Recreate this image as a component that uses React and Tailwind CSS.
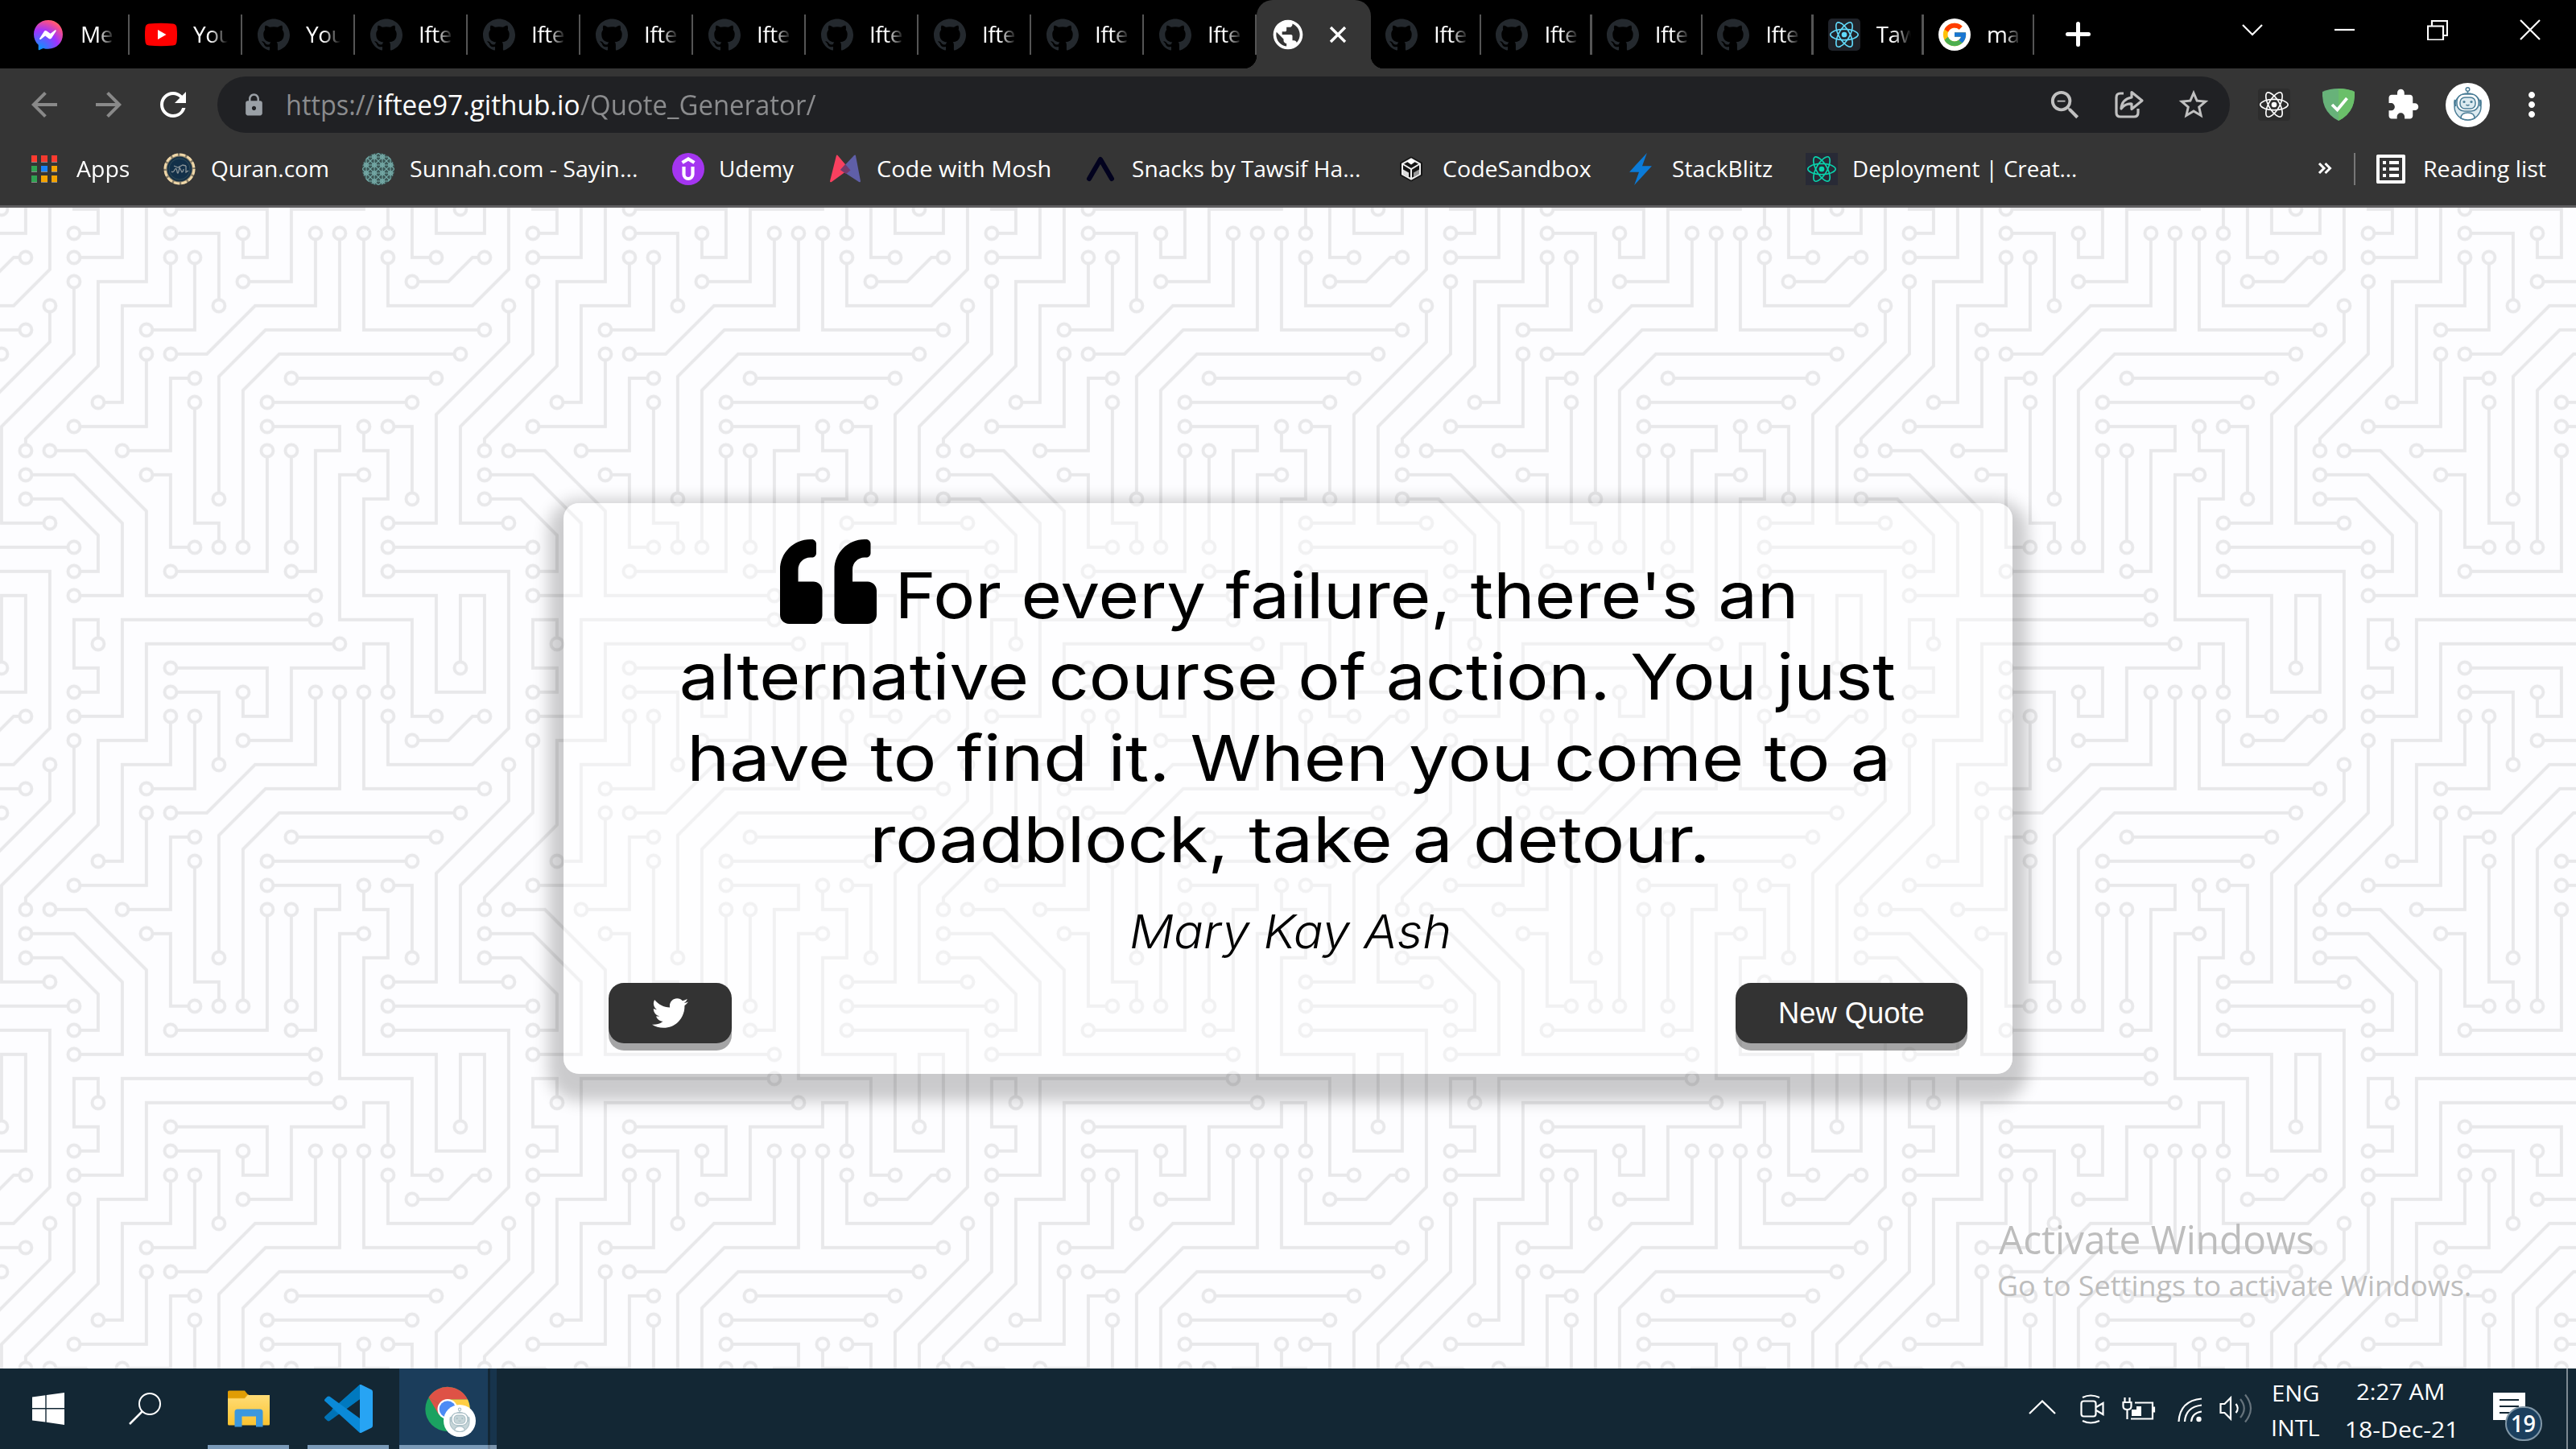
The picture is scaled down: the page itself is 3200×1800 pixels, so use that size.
import React, { useLayoutEffect, useRef, useState } from "react";
import { SiGithub, SiReact } from "react-icons/si";
import { FcGoogle } from "react-icons/fc";
import { FaQuoteLeft, FaTwitter } from "react-icons/fa";
import {
  MdPublic, MdArrowBack, MdArrowForward, MdRefresh, MdLock, MdZoomOut,
  MdStarBorder, MdExtension, MdMoreVert, MdListAlt,
} from "react-icons/md";

/* Single line of text stretched so that its ink spans exactly `width` pixels. */
function Fit({ width, className = "", children }) {
  const ref = useRef(null);
  const [box, setBox] = useState({ scale: 1, shift: 0 });
  useLayoutEffect(() => {
    const cs = getComputedStyle(ref.current);
    const ctx = document.createElement("canvas").getContext("2d");
    ctx.font = `${cs.fontStyle} ${cs.fontWeight} ${cs.fontSize} ${cs.fontFamily}`;
    const m = ctx.measureText(children);
    const scale = width / (m.actualBoundingBoxLeft + m.actualBoundingBoxRight);
    setBox({ scale, shift: m.actualBoundingBoxLeft * scale });
  }, [children, width]);
  return (
    <span className={"block shrink-0 " + className} style={{ width }}>
      <span
        ref={ref}
        className="inline-block origin-left whitespace-pre"
        style={{ transform: `translateX(${box.shift}px) scaleX(${box.scale})` }}
      >
        {children}
      </span>
    </span>
  );
}

/* ---------- circuit board background ---------- */
/* Traces on a 19 x 19 grid; both ends of each carry a pad. */
const TRACES = [
  "7,19 11,19 11,21 10,21 10,20",
  "19,19 19,16 20,16 20,20 18,20 18,16 15,16 15,12 16,12 16,10 15,10 15,9",
  "3,20 4,20 4,19 3,19 3,17 4,17 4,18",
  "7,20 9,20 9,23",
  "13,1 13,4 10.5,4 8.5,6 7,6",
  "14,1 14,5 10.93,5 9,6.93 9,12",
  "15,1 15,5 20,5",
  "16,20 16,18 15,18 15,19 12,19 12,22 10,22",
  "20,2 19.5,2 18.5,3 17,3",
  "3,21 5,21 5,17 13,17",
  "7,2 7,4 5,4 5,8 4,8",
  "8,2 8,5 6,5",
  "16,15 21,15 21,21.5 19.5,23 16,23 16,21",
  "18,21 17,21 17,17 14,17 14,11 15,11",
  "3,3 3,6 0,9 0,13 2,13",
  "21,4 21,5.5 18,8.5 18,13 16,13",
  "19,6 11.5,6 10,7.5 10,14",
  "6,6 6,9 3,9",
  "8,7 7,7 7,10 5,10",
  "12,7 18,7",
  "11,8 17,8",
  "8,8 8,13 9,13 9,14",
  "11,9 14,9 14,10 13,10 13,15 12,15",
  "16,9 17,9 17,12",
  "1,10 1,9.5 4,6.5 4,3 6,3 6,-1 14,-1",
  "2,10 3.5,10 6,12.5 6,16 13,16",
  "11,10 11,15 7,15",
  "12,10 12,14",
  "1,11 3,11 5,13 5,16 3,16",
  "6,11 7,11 7,14 8,14",
  "1,12 2.5,12 4,13.5 4,15 3,15",
  "16,14 22,14",
];
const SHIFTS = [-19, 0, 19];

function Circuit() {
  return (
    <svg className="absolute inset-0 h-full w-full" aria-hidden="true">
      <defs>
        <g id="traces" fill="none" stroke="#e8e8ea" strokeWidth="0.13">
          {TRACES.map((t) => <polyline key={t} points={t} />)}
          {TRACES.map((t) => {
            const pts = t.split(" ");
            return [pts[0], pts[pts.length - 1]].map((p) => {
              const [cx, cy] = p.split(",");
              return <circle key={t + p} cx={cx} cy={cy} r="0.25" fill="#fdfdff" />;
            });
          })}
        </g>
        <pattern id="board" width="19" height="19" patternUnits="userSpaceOnUse" patternTransform="translate(1.9 1.8) scale(30)">
          {SHIFTS.map((x) => SHIFTS.map((y) => <use key={x + "_" + y} href="#traces" x={x} y={y} />))}
        </pattern>
      </defs>
      <rect width="100%" height="100%" fill="#fdfdff" />
      <rect width="100%" height="100%" fill="url(#board)" />
    </svg>
  );
}

/* ---------- small icons ---------- */
const Messenger = () => (
  <svg className="h-10 w-10" viewBox="0 0 40 40">
    <defs>
      <radialGradient id="msg" cx="0.2" cy="1" r="1.1">
        <stop offset="0" stopColor="#0099ff" /><stop offset="0.6" stopColor="#a033ff" />
        <stop offset="0.93" stopColor="#ff5280" /><stop offset="1" stopColor="#ff7061" />
      </radialGradient>
    </defs>
    <path d="M20 2C9.700 2 2 9.600 2 19.700c0 5.300 2.200 9.900 5.700 13v5.500c0 .8.800 1.200 1.400.9l4.600-2.200c2 .6 4.100.8 6.300.8 10.300 0 18-7.600 18-17.900S30.300 2 20 2z" fill="url(#msg)" />
    <path d="M9.200 24.800l5.300-8.400a2.700 2.700 0 0 1 3.900-.7l4.200 3.100 5.700-4.300c.8-.6 1.800.3 1.300 1.200l-5.300 8.300a2.700 2.700 0 0 1-3.900.7l-4.200-3.100-5.700 4.300c-.8.600-1.800-.3-1.300-1.100z" fill="#fff" />
  </svg>
);
const Youtube = () => (
  <svg className="h-10 w-10" viewBox="0 0 40 40">
    <path d="M5 6.500Q20 5 35 6.500Q39 7 39.500 11Q40.500 20 39.500 29Q39 33 35 33.500Q20 35 5 33.500Q1 33 .5 29Q-.5 20 .5 11Q1 7 5 6.500Z" fill="#f00" />
    <path d="M16 14l10.500 6L16 26z" fill="#fff" />
  </svg>
);
const Github = () => <SiGithub className="h-10 w-10 text-[#24292e]" />;
const ReactTile = () => (
  <span className="flex h-10 w-10 items-center justify-center rounded-[5px] bg-[#20232a]">
    <SiReact className="h-9 w-9 text-[#61dafb]" />
  </span>
);
const Google = () => (
  <span className="flex h-10 w-10 items-center justify-center rounded-full bg-white">
    <FcGoogle className="h-[34px] w-[34px]" />
  </span>
);

const AppsGrid = () => {
  const c = ["#ff3b30", "#f23a2f", "#ff3b30", "#30a352", "#1a83f7", "#f5a300", "#30a352", "#f5a300", "#f5a300"];
  return (
    <span className="grid h-[34px] w-8 grid-cols-3 gap-x-[5px] gap-y-[4px]">
      {c.map((f, i) => <span key={i} className="border-b border-[#8a8a8a]" style={{ backgroundColor: f }} />)}
    </span>
  );
};
const Quran = () => (
  <svg className="h-10 w-10" viewBox="0 0 40 40">
    <circle cx="20" cy="20" r="17.500" fill="#173247" stroke="#8a7f68" strokeWidth="4" />
    <circle cx="20" cy="20" r="18" fill="none" stroke="#efd7a8" strokeWidth="3" strokeDasharray="7 2.400" />
    <circle cx="20" cy="20" r="13" fill="#123049" stroke="#2f4a58" />
    <path d="M10 23q2 2 4-2t3 2 3-5l3 6q2-1 2-4m-12-4l5 2 6-3 4 1m0 0v8l3-2" fill="none" stroke="#8b9599" strokeWidth="1.300" />
  </svg>
);
const Sunnah = () => (
  <svg className="h-10 w-10" viewBox="0 0 40 40">
    <defs>
      <pattern id="stars" width="10" height="10" patternUnits="userSpaceOnUse">
        <path d="M0 0l10 10M10 0L0 10M5 0v10M0 5h10" stroke="#75aba8" strokeWidth="1.100" />
        <circle cx="5" cy="5" r="2.600" fill="none" stroke="#75aba8" strokeWidth="1" />
      </pattern>
    </defs>
    <circle cx="20" cy="20" r="20" fill="#3b5655" />
    <circle cx="20" cy="20" r="20" fill="url(#stars)" />
  </svg>
);
const Udemy = () => (
  <svg className="h-10 w-10" viewBox="0 0 40 40">
    <circle cx="20" cy="20" r="20" fill="#a435f0" />
    <path d="M12.500 12L20 7.500l7.500 4.500M14.500 17v9.500a5.500 5.500 0 0 0 11 0V17" fill="none" stroke="#fff" strokeWidth="4.200" />
  </svg>
);
const Mosh = () => (
  <svg className="h-10 w-10" viewBox="0 0 40 40">
    <path d="M9 3q1-1 2 .5L25 20 3 36q-2 1-2-1z" fill="#f9405f" />
    <path d="M31 3q2-1 2 .5L39 35q0 2-2 1L14 21z" fill="#5f5fa8" />
    <path d="M20 14l6.500 7.500L21 26l-7-5z" fill="#74396a" />
  </svg>
);
const Snacks = () => (
  <svg className="h-10 w-10" viewBox="0 0 40 40">
    <path d="M6 32L20 8l14 24" fill="none" stroke="#02021e" strokeWidth="6" strokeLinejoin="round" strokeLinecap="round" />
  </svg>
);
const CodeSandbox = () => (
  <svg className="h-10 w-10" viewBox="0 0 40 40">
    <path d="M20 4.500l14 7.500v16l-14 7.500L6 28V12z" fill="#151515" />
    <path d="M20 7.500l11 6v13L20 32.500 9 26.500v-13zM9 13.500l11 6.500 11-6.500M20 20v12" fill="none" stroke="#eee" strokeWidth="2" />
    <path d="M14.500 10.500l5.500 4 5.500-4L20 7z" fill="#fff" />
    <path d="M23 24.500l7-4v5.500l-7 4z" fill="#999" />
    <path d="M17 24.500l-7-4v5.500l7 4z" fill="#ddd" />
  </svg>
);
const Stackblitz = () => (
  <svg className="h-10 w-10" viewBox="0 0 24 24">
    <path d="M10.797 14.182H3.635L16.728 0l-3.525 9.818h7.162L7.272 24l3.524-9.818Z" fill="#0b7bd8" />
  </svg>
);
const Deployment = () => (
  <span className="flex h-10 w-10 items-center justify-center bg-[#282a36]">
    <SiReact className="h-9 w-9 text-[#09d3ac]" />
  </span>
);

const Share = () => (
  <svg className="h-10 w-10" viewBox="0 0 40 40" fill="none" stroke="#c0c0c0" strokeWidth="3.200" strokeLinejoin="round">
    <path d="M13 6H9q-5 0-5 5v19q0 5 5 5h17q5 0 5-5v-5" />
    <path d="M23 4.500L36 15 23 25.500V19Q15 18.500 10 25q1-12 13-14z" />
  </svg>
);
const Shield = () => (
  <svg className="h-10 w-10" viewBox="0 0 40 40">
    <path d="M20 0Q31 0 40 4Q40.500 15 37 23Q32 34 20 40Q8 34 3 23Q-.5 15 0 4Q9 0 20 0Z" fill="#67b279" />
    <path d="M20 0Q31 0 40 4Q40.500 15 37 23Q32 34 20 40Z" fill="#6abf69" />
    <path d="M12 20l6.500 6.500L30.500 12" fill="none" stroke="#fff" strokeWidth="3.800" />
  </svg>
);
function Robot({ className, tone = "#4b7d96", fill = "#dceaf0" }) {
  return (
    <svg className={className} viewBox="0 0 55 55" fill="none" stroke={tone} strokeWidth="1.500">
      <circle cx="27.500" cy="27.500" r="27.500" fill="#fff" stroke="none" />
      <circle cx="27.500" cy="29.500" r="16.500" fill={fill} />
      <path d="M12 21q-1.500 4 .5 8M43 21q1.500 4-.5 8" strokeWidth="2.500" />
      <rect x="14" y="14" width="27" height="21" rx="9" fill="#fff" />
      <rect x="18" y="18" width="19" height="14" rx="6" fill={fill} />
      <path d="M19 44q0-7 8.500-7t8.500 7q-8 4-17 0z" fill="#fff" />
      <path d="M27.500 10v4" />
      <circle cx="27.500" cy="8" r="2.300" />
      <circle cx="23" cy="23.500" r="1.600" fill={tone} stroke="none" />
      <circle cx="32" cy="23.500" r="1.600" fill={tone} stroke="none" />
      <path d="M25.500 27q2 2 4 0" />
    </svg>
  );
}

/* ---------- tab strip ---------- */
function Tab({ icon, label, wide }) {
  return (
    <div className={"flex h-full shrink-0 items-center " + (wide ? "w-[140px] pl-[19px]" : "w-[137.4px] pl-[18px]")}>
      {icon}
      <span className="ml-5 w-[43px] -translate-y-px overflow-hidden whitespace-nowrap text-[28px] leading-10 tracking-[-0.5px] text-white [mask-image:linear-gradient(to_right,black_50%,transparent)]">
        {label}
      </span>
      <span className="ml-auto h-[50px] w-[2.500px] bg-[#555]" />
    </div>
  );
}

function ActiveTab() {
  return (
    <div className="relative flex h-full w-[142px] shrink-0 items-center rounded-t-[20px] bg-[#353535] pl-[17px]">
      <span className="absolute -left-4 bottom-0 h-4 w-4 bg-[radial-gradient(circle_at_top_left,transparent_16px,#353535_16.500px)]" />
      <span className="absolute -right-4 bottom-0 h-4 w-4 bg-[radial-gradient(circle_at_top_right,transparent_16px,#353535_16.500px)]" />
      <MdPublic className="h-[44px] w-[44px] text-white" />
      <svg className="ml-[29px] h-[22px] w-[22px]" viewBox="0 0 22 22">
        <path d="M2 2l18 18M20 2L2 20" stroke="#fff" strokeWidth="3.400" />
      </svg>
    </div>
  );
}

const LEFT_TABS = [
  [<Messenger />, "Me"], [<Youtube />, "You"], [<Github />, "You"],
  ...Array.from({ length: 8 }, () => [<Github />, "Ifte"]),
];
const RIGHT_TABS = [
  ...Array.from({ length: 4 }, () => [<Github />, "Ifte"]),
  [<ReactTile />, "Taw"], [<Google />, "ma"],
];

function TabStrip() {
  return (
    <div className="flex h-[85px] bg-black pl-[21px]">
      {LEFT_TABS.map(([icon, label], i) => <Tab key={i} icon={icon} label={label} wide />)}
      <ActiveTab />
      {RIGHT_TABS.map(([icon, label], i) => <Tab key={i} icon={icon} label={label} />)}
      <svg className="ml-[39px] mt-[27px] h-[31px] w-[31px]" viewBox="0 0 31 31">
        <path d="M15.500 2.500v26M2.500 15.500h26" stroke="#fff" strokeWidth="5" strokeLinecap="round" />
      </svg>
      <div className="ml-auto flex h-[74px] items-center">
        {[
          "M1 7l12 12L25 7", "M0 13h25", "M1 8.500h19v17H1zM6 8V2h19v18h-5", "M1 1l24 24M25 1L1 25",
        ].map((d) => (
          <span key={d} className="flex w-[115px] justify-center">
            <svg className="h-[26px] w-[26px]" viewBox="0 0 26 26" fill="none" stroke="#fff" strokeWidth="2.200"><path d={d} /></svg>
          </span>
        ))}
      </div>
    </div>
  );
}

/* ---------- toolbar ---------- */
const Cell = ({ children, className = "w-20" }) => (
  <span className={"flex shrink-0 items-center justify-center " + className}>{children}</span>
);

function Toolbar() {
  return (
    <div className="flex h-[90px] items-center bg-[#353535] px-[15px]">
      <Cell><MdArrowBack className="h-12 w-12 text-[#898989]" /></Cell>
      <Cell><MdArrowForward className="h-12 w-12 text-[#898989]" /></Cell>
      <Cell><MdRefresh className="h-12 w-12 text-white" /></Cell>
      <div className="ml-[15px] flex h-[70px] w-[2500px] items-center rounded-full bg-[#202124] pr-[5px] text-[34px] leading-[46px] text-[#8b8c8e]">
        <Cell className="w-[87px] pl-1"><MdLock className="h-[31px] w-[31px] text-[#9aa0a6]" /></Cell>
        <Fit width={109}>https://</Fit>
        <Fit width={249} className="ml-[4px] text-white">iftee97.github.io</Fit>
        <Fit width={293} className="ml-[2px]">/Quote_Generator/</Fit>
        <div className="ml-auto flex text-[#c0c0c0]">
          <Cell><MdZoomOut className="h-[47px] w-[47px]" /></Cell>
          <Cell><Share /></Cell>
          <Cell><MdStarBorder className="h-[44px] w-[44px]" /></Cell>
        </div>
      </div>
      <div className="ml-[15px] flex items-center">
        <Cell>
          <span className="flex h-10 w-10 items-center justify-center rounded-[4px] bg-[#2d2d2d]">
            <SiReact className="h-9 w-9 text-white" />
          </span>
        </Cell>
        <Cell><Shield /></Cell>
        <Cell><MdExtension className="h-[42px] w-[42px] text-white" /></Cell>
        <Cell><Robot className="h-[55px] w-[55px]" /></Cell>
        <Cell><MdMoreVert className="h-12 w-12 text-white" /></Cell>
      </div>
    </div>
  );
}

const BOOKMARKS = [
  ["w-[168px]", <AppsGrid />, "Apps", 66],
  ["w-[247px]", <Quran />, "Quran.com", 144],
  ["w-[385px]", <Sunnah />, "Sunnah.com - Sayin...", 281],
  ["w-[195px]", <Udemy />, "Udemy", 92],
  ["w-[317px]", <Mosh />, "Code with Mosh", 214],
  ["w-[386px]", <Snacks />, "Snacks by Tawsif Ha...", 282],
  ["w-[285px]", <CodeSandbox />, "CodeSandbox", 184],
  ["w-[225px]", <Stackblitz />, "StackBlitz", 124],
  ["w-[340px]", <Deployment />, "Deployment | Creat...", 276],
];

function Bookmarks() {
  return (
    <div className="flex h-[80px] items-center bg-[#353535] pb-[10px] pl-[35px] text-[28px] leading-10 text-white">
      {BOOKMARKS.map(([w, icon, label, width]) => (
        <div key={label} className={"flex shrink-0 items-center " + w}>
          <Cell className="w-10">{icon}</Cell>
          <Fit width={width} className="ml-5 -translate-y-px">{label}</Fit>
        </div>
      ))}
      <svg className="ml-[296px] h-[16px] w-[18px] -translate-y-px" viewBox="0 0 18 16" fill="none" stroke="#fff" strokeWidth="3">
        <path d="M2 2l6 6-6 6M9.500 2l6 6-6 6" />
      </svg>
      <span className="ml-[27px] h-10 w-[2px] bg-[#777]" />
      <MdListAlt className="ml-[20px] h-12 w-12 text-white" />
      <Fit width={151} className="ml-[18px] -translate-y-px">Reading list</Fit>
    </div>
  );
}

/* ---------- page ---------- */
function QuoteCard() {
  return (
    <section className="relative mt-[367px] flex h-[709px] w-[1800px] flex-col items-center rounded-[19px] bg-white/40 pt-[63.500px] text-black shadow-[0_15px_19px_19px_rgba(0,0,0,0.2)]">
      <div className="flex flex-col items-center font-['Inter',sans-serif] text-[79px] font-[440] leading-[101px]">
        <div className="flex h-[101px] -translate-x-[2px] items-center">
          <FaQuoteLeft className="h-[120px] w-[120px] -translate-y-[16.500px]" />
          <Fit width={1110} className="ml-[29px]">For every failure, there's an</Fit>
        </div>
        <Fit width={1507}>alternative course of action. You just</Fit>
        <Fit width={1483} className="ml-[2px]">have to find it. When you come to a</Fit>
        <Fit width={1031} className="ml-[4px]">roadblock, take a detour.</Fit>
      </div>
      <Fit width={396} className="ml-[5px] mt-[29px] font-['Inter',sans-serif] text-[58px] font-light italic leading-[70px]">Mary Kay Ash</Fit>
      <div className="mt-[29px] flex w-full justify-between px-[56px]">
        <button className="flex h-[75px] w-[153px] items-center justify-center rounded-[19px] bg-[#333] text-white shadow-[0_9px_0_rgba(0,0,0,0.35)]">
          <FaTwitter className="h-[45px] w-[45px]" />
        </button>
        <button className="flex h-[75px] w-[288px] items-center justify-center rounded-[19px] bg-[#333] pl-[2px] text-left font-['Liberation_Sans',sans-serif] text-[37.500px] leading-[44px] text-white shadow-[0_9px_0_rgba(0,0,0,0.35)]">
          <Fit width={178}>New Quote</Fit>
        </button>
      </div>
    </section>
  );
}

function Page() {
  return (
    <main className="relative flex h-[1445px] flex-col items-center overflow-hidden border-t-[3px] border-[#605f61]">
      <Circuit />
      <QuoteCard />
      <div className="absolute bottom-[79px] left-[2483px] text-[#bdbdbd]">
        <Fit width={390} className="text-[50px] leading-[68px]">Activate Windows</Fit>
        <Fit width={585} className="text-[35px] leading-[48px]">Go to Settings to activate Windows.</Fit>
      </div>
    </main>
  );
}

/* ---------- taskbar ---------- */
const WindowsLogo = () => (
  <svg className="h-10 w-10" viewBox="0 0 40 40" fill="#fff">
    <path d="M0 5.500L16.300 3.200V19H0zM17.700 3L40 0v19H17.700zM0 20.500h16.300v16L0 34.400zM17.700 20.500H40V40l-22.300-3.200z" />
  </svg>
);
const Search = () => (
  <svg className="h-10 w-10" viewBox="0 0 40 40" fill="none" stroke="#fff" strokeWidth="2">
    <circle cx="26" cy="14" r="13" /><path d="M16.500 23.500L1 39" strokeWidth="2.500" />
  </svg>
);
const Explorer = () => (
  <svg className="h-[46px] w-[54px]" viewBox="0 0 54 46">
    <defs>
      <linearGradient id="folder" x1="0" y1="0" x2="0" y2="1"><stop offset="0" stopColor="#ffdc76" /><stop offset="1" stopColor="#fbc32f" /></linearGradient>
    </defs>
    <path d="M1 6h52v36q0 1.500-1.500 1.500H2.500Q1 43.500 1 42z" fill="url(#folder)" />
    <path d="M1 2Q1 .5 2.500.5H22l4 5-4 4.500H1z" fill="#e09d05" />
    <path d="M27 5.500h-1.500L22 10H1" fill="none" stroke="#f3b62b" strokeWidth="0.600" />
    <path d="M9.500 45.500V27q0-3.500 3.500-3.500h28q3.500 0 3.500 3.500v18.500H36V32.500H18.500v13z" fill="#3c98de" />
  </svg>
);
const VSCode = () => (
  <svg className="h-[60px] w-[60px]" viewBox="0 0 60 60">
    <path d="M44 0v18L6.500 45Q5 46 3.500 44.800L.6 42q-1.200-1.300 0-2.600z" fill="#0072b5" />
    <path d="M44 0v18L18 37l-9-6z" fill="#0079bf" />
    <path d="M44 60V42L6.500 14.800Q5 14 3.500 15L.6 18q-1.200 1.300 0 2.600z" fill="#0a8ad8" />
    <path d="M44 0q1-.3 2 .2l12.300 6Q60 7 60 9v42q0 2-1.700 2.800l-12.300 6q-1 .4-2 0z" fill="#27a4f4" />
  </svg>
);
const Chrome = () => (
  <svg className="h-[64px] w-[64px]" viewBox="0 0 64 64">
    <circle cx="28" cy="28.500" r="27.700" fill="#1ba261" />
    <path d="M28 28.500L4.500 14A27.700 27.700 0 0 1 53 16.500H28z" fill="#de5246" />
    <path d="M28 16.500h25a27.700 27.700 0 0 1-25 39.700L39 34z" fill="#ffce44" />
    <path d="M4.500 14l12.800 21.500L28 28.500z" fill="#de5246" />
    <circle cx="28" cy="28.500" r="12.500" fill="#fff" />
    <circle cx="28" cy="28.500" r="10.300" fill="#4c8bf5" />
  </svg>
);

const stroke = { fill: "none", stroke: "#fff", strokeWidth: 2.2 };
const Tray = () => (
  <>
    <Cell className="w-[60px] -translate-y-[3px]">
      <svg className="h-[18px] w-[34px]" viewBox="0 0 34 18" {...stroke}><path d="M1 17L17 1.500 33 17" /></svg>
    </Cell>
    <Cell className="w-[60px] translate-x-[2px]">
      <svg className="h-[37px] w-[30px]" viewBox="0 0 30 37" {...stroke}>
        <path d="M3 4q10-5 21 0M3 33q10 5 21 0" />
        <rect x="1.500" y="8.500" width="18" height="19" rx="3" />
        <path d="M20 16l8.500-5v14L20 20" />
      </svg>
    </Cell>
    <Cell className="w-[60px] -translate-y-px">
      <svg className="h-[28px] w-[42px]" viewBox="0 0 42 28" {...stroke}>
        <path d="M16 6.500h22v20H11M40 11.500v7" />
        <path d="M12 15h6v-4h6v12H12z" fill="#fff" stroke="none" />
        <path d="M3.500 0v6M9.500 0v6M1.500 6h10v5q0 4-5 4t-5-4zM6.500 15v12" />
      </svg>
    </Cell>
    <Cell className="w-[60px] translate-x-[3px] translate-y-[1px]">
      <svg className="h-[31px] w-[31px]" viewBox="0 0 31 31" {...stroke}>
        <path d="M1.500 30Q3 4 30 1.500M9 30Q10 12 30 9.500M17 30Q18 19 30 17.500" />
        <circle cx="26.500" cy="27" r="3.200" fill="#fff" stroke="none" />
      </svg>
    </Cell>
    <Cell className="w-[60px] -translate-y-px">
      <svg className="h-[37px] w-[41px]" viewBox="0 0 41 37" {...stroke}>
        <path d="M1.500 13h5l7.500-7.500v26L6.500 24h-5z" />
        <path d="M20.500 13q4.500 5.500 0 11" />
        <path d="M26 7q9.500 11.500 0 23M32 1.500q14 17 0 34" stroke="#66737c" />
      </svg>
    </Cell>
  </>
);

function Taskbar() {
  return (
    <div className="flex h-[100px] items-stretch bg-[#132734] text-white">
      <Cell className="w-[120px]"><WindowsLogo /></Cell>
      <Cell className="w-[120px]"><Search /></Cell>
      <Cell className="ml-[18px] w-[101px] border-b-[5px] border-[#7a9ab8] pt-[4px]"><Explorer /></Cell>
      <Cell className="ml-[23px] w-[101px] border-b-[5px] border-[#7a9ab8] pt-[5px]"><VSCode /></Cell>
      <Cell className="relative ml-[13px] w-[110px] border-b-[5px] border-[#7a9ab8] bg-[#1b3d5b] pt-[12px] pl-[18px]">
        <Chrome />
        <span className="absolute left-[55px] top-[45px] h-10 w-10">
          <Robot className="h-10 w-10" tone="#a9bfc6" fill="#c6d5d8" />
        </span>
      </Cell>
      <span className="w-[3px] border-b-[5px] border-[#6b8197]" />
      <span className="w-2 border-b-[5px] border-[#7a93ab] bg-[#17344c]" />
      <div className="ml-auto flex text-[28px]">
        <div className="flex items-center pt-[1px]"><Tray /></div>
        <div className="flex w-[90px] flex-col items-center pt-[9px] leading-[43.400px]">
          <Fit width={56}>ENG</Fit>
          <Fit width={58}>INTL</Fit>
        </div>
        <div className="flex w-[168px] flex-col items-center pt-[5px] leading-[47px]">
          <Fit width={107}>2:27 AM</Fit>
          <Fit width={133}>18-Dec-21</Fit>
        </div>
        <div className="w-[123px] pl-[32px] pt-[30px]">
          <div className="relative h-[60px] w-[62px]">
            <svg className="h-[39px] w-[40px]" viewBox="0 0 40 39">
              <path d="M0 0h40v34H24l-5 5-4-5H0z" fill="#fff" />
              <path d="M8 9h24M8 17h24M8 25h16" stroke="#132734" strokeWidth="2" />
            </svg>
            <span className="absolute left-[15px] top-[17px] flex h-[43px] w-[46px] items-center justify-center rounded-full border-2 border-[#8298a8] bg-[#1b3f5e] font-semibold">
              <Fit width={28} className="-translate-y-px leading-[38px]">19</Fit>
            </span>
          </div>
        </div>
        <span className="mr-[10px] w-[2px] bg-[#7d8a93]" />
      </div>
    </div>
  );
}

export default function App() {
  return (
    <div className="h-[1800px] w-[3200px] overflow-hidden bg-black font-['Open_Sans',sans-serif]">
      <TabStrip />
      <Toolbar />
      <Bookmarks />
      <Page />
      <Taskbar />
    </div>
  );
}
